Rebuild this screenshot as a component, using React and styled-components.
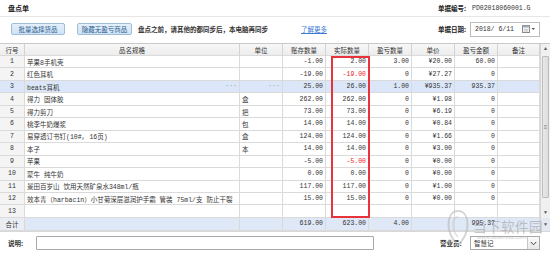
import React from 'react';
import styled, { createGlobalStyle } from 'styled-components';

const Global = createGlobalStyle`
  html, body { margin: 0; padding: 0; background: #fff; }
  body {
    font-family: 'Liberation Mono', 'Noto Sans CJK SC', monospace;
    font-size: 6.5px;
    color: #333;
  }
  * { box-sizing: border-box; }
`;

const Page = styled.div`
  width: 550px;
  height: 254px;
  position: relative;
  overflow: hidden;
  display: flex;
  flex-direction: column;
  background: #fff;
`;

const TitleBar = styled.div`
  height: 17px;
  display: flex;
  align-items: center;
  justify-content: space-between;
  padding: 0 10px 0 8px;
  border-bottom: 1px solid #e6e6e6;
`;

const Title = styled.div`
  font-family: 'Noto Sans CJK SC', sans-serif;
  font-weight: bold;
  font-size: 7px;
  color: #222;
`;

const FieldRow = styled.div`
  width: 102px;
  display: flex;
  align-items: center;
`;

const FieldLabel = styled.span`
  font-family: 'Noto Sans CJK SC', sans-serif;
  font-weight: bold;
  color: #222;
  width: ${p => p.$w}px;
  flex: none;
`;

const FieldValue = styled.span`
  color: #333;
`;

const Toolbar = styled.div`
  height: 26px;
  display: flex;
  align-items: center;
  padding: 0 10px 2px 11px;
`;

const ToolButton = styled.button`
  height: 12px;
  width: ${p => p.$w}px;
  margin-right: ${p => p.$mr}px;
  padding: 0;
  border: 1px solid #9fbcd9;
  border-radius: 2px;
  background: linear-gradient(#e4f0fb, #cfe3f6);
  color: #2f5d8c;
  font-family: 'Noto Sans CJK SC', sans-serif;
  font-size: 6.5px;
  line-height: 10px;
`;

const Notice = styled.span`
  font-family: 'Noto Sans CJK SC', sans-serif;
  font-weight: bold;
  color: #333;
  width: 163px;
  white-space: nowrap;
`;

const Link = styled.a`
  font-family: 'Noto Sans CJK SC', sans-serif;
  color: #3b7bd0;
  text-decoration: underline;
`;

const Spacer = styled.div`
  flex: 1;
`;

const DateBox = styled.div`
  width: 70px;
  height: 15px;
  border: 1px solid #bcbcbc;
  display: flex;
  align-items: center;
  padding: 0 3px 0 4px;
  background: #fff;
  color: #333;
`;

const TableWrap = styled.div`
  display: flex;
  height: 188px;
  border-top: 1px solid #c9c9c9;
`;

const Grid = styled.div`
  position: relative;
  width: 540px;
  display: grid;
  grid-template-columns: 25px 215px repeat(6, 43px) 42px;
  grid-template-rows: 12px repeat(13, 12.46px) 13px;
`;

const Cell = styled.div`
  display: flex;
  align-items: center;
  justify-content: ${p => (p.$align === 'right' ? 'flex-end' : p.$align === 'center' ? 'center' : 'space-between')};
  padding: 0 2px;
  border-right: 1px solid #dadada;
  border-bottom: 1px solid #dadada;
  white-space: nowrap;
  overflow: hidden;
  background: ${p => p.$bg || '#fff'};
  color: ${p => (p.$red ? '#f01818' : '#333')};
`;

const HeadCell = styled(Cell)`
  font-family: 'Noto Sans CJK SC', sans-serif;
  justify-content: center;
  background: linear-gradient(#f7f7f7, #ededed);
  border-right-color: #d2d2d2;
  color: #333;
`;

const Dots = styled.span`
  color: #999;
  letter-spacing: 0;
`;

const RedFrame = styled.div`
  position: absolute;
  left: 331px;
  top: 12px;
  width: 39px;
  height: 162px;
  border: 2px solid #e8323c;
  pointer-events: none;
`;

const ScrollBar = styled.div`
  width: 10px;
  display: flex;
  flex-direction: column;
  background: #f0f0f0;
  border-left: 1px solid #d6d6d6;
`;

const ScrollBtn = styled.div`
  height: ${p => p.$h}px;
  margin-bottom: ${p => p.$mb || 0}px;
  display: flex;
  align-items: center;
  justify-content: center;
  color: #555;
  font-size: 5px;
  background: ${p => p.$bg || 'transparent'};
`;

const Thumb = styled.div`
  height: 142px;
  margin: 0 1px;
  border: 1px solid #bdbdbd;
  border-radius: 1px;
  background: linear-gradient(90deg, #e9e9e9, #dcdcdc);
  display: flex;
  align-items: center;
  justify-content: center;
  color: #777;
  font-size: 6px;
`;

const FooterBar = styled.div`
  flex: 1;
  display: flex;
  align-items: center;
  padding: 0 10px 0 8px;
  border-top: 1px solid #d8d8d8;
`;

const FooterLabel = styled.span`
  font-family: 'Noto Sans CJK SC', sans-serif;
  font-weight: bold;
  color: #333;
  width: ${p => p.$w}px;
  flex: none;
`;

const NoteInput = styled.div`
  width: 338px;
  height: 14px;
  border: 1px solid #a9a9a9;
  border-radius: 1px;
  background: #fff;
`;

const Select = styled.div`
  width: 70px;
  height: 14px;
  border: 1px solid #a9a9a9;
  display: flex;
  align-items: center;
  background: #fff;
`;

const SelectText = styled.span`
  flex: 1;
  padding-left: 3px;
  font-family: 'Noto Sans CJK SC', sans-serif;
  color: #333;
`;

const SelectBtn = styled.div`
  width: 12px;
  height: 100%;
  border-left: 1px solid #c6c6c6;
  background: linear-gradient(#fafafa, #e9e9e9);
  display: flex;
  align-items: center;
  justify-content: center;
`;

const Watermark = styled.div`
  position: absolute;
  left: 447px;
  top: 209px;
  display: flex;
  align-items: center;
  gap: 4px;
  opacity: 0.55;
  pointer-events: none;
`;

const WmText = styled.div`
  display: flex;
  flex-direction: column;
  align-items: flex-start;
  margin-top: 2px;
`;

const WmTitle = styled.span`
  font-family: 'Noto Sans CJK SC', sans-serif;
  font-size: 13.5px;
  line-height: 15px;
  color: #9a9a9a;
  letter-spacing: 0.5px;
`;

const WmSub = styled.span`
  font-family: 'Liberation Sans', sans-serif;
  font-size: 6px;
  color: #a8a8a8;
  margin-left: 4px;
`;

const rows = [
  ['苹果8手机壳', '', '-1.00', '2.00', '3.00', '¥20.00', '60.00'],
  ['红色耳机', '', '-19.00', '-19.00', '0', '¥27.27', '0', true],
  ['beats耳机', '', '25.00', '26.00', '1.00', '¥935.37', '935.37'],
  ['得力 固体胶', '盒', '262.00', '262.00', '0', '¥1.98', '0'],
  ['得力剪刀', '把', '73.00', '73.00', '0', '¥6.19', '0'],
  ['桃李牛奶爆浆', '包', '14.00', '14.00', '0', '¥0.84', '0'],
  ['易穿透订书钉(10#, 16页)', '盒', '124.00', '124.00', '0', '¥1.66', '0'],
  ['本子', '本', '14.00', '14.00', '0', '¥3.00', '0'],
  ['苹果', '', '-5.00', '-5.00', '0', '¥0.00', '0', true],
  ['蒙牛 纯牛奶', '', '0.00', '0.00', '0', '¥0.00', '0'],
  ['景田百岁山 饮用天然矿泉水348ml/瓶', '', '117.00', '117.00', '0', '¥1.00', '0'],
  ['效本青（harbacin）小甘菊深层滋润护手霜 管装 75ml/支 防止干裂', '', '15.00', '15.00', '0', '¥0.00', '0'],
  ['', '', '', '', '', '', ''],
];

const headers = ['行号', '品名规格', '单位', '账存数量', '实际数量', '盈亏数量', '单价', '盈亏金额', '备注'];

const SEL = '#dbe7f8';

function CalendarIcon() {
  return (
    <svg width="14" height="8" viewBox="0 0 14 8">
      <rect x="0.5" y="0.5" width="7" height="7" fill="#f4f4f4" stroke="#8a8a8a" />
      <rect x="0.5" y="0.5" width="7" height="2" fill="#9aa9bb" />
      <line x1="2" y1="4.5" x2="6" y2="4.5" stroke="#aaa" strokeWidth="0.6" />
      <line x1="2" y1="6" x2="6" y2="6" stroke="#aaa" strokeWidth="0.6" />
      <path d="M9.5 3 L13 3 L11.25 5 Z" fill="#555" />
    </svg>
  );
}

function Chevron() {
  return (
    <svg width="7" height="5" viewBox="0 0 7 5">
      <polyline points="0.8,1 3.5,3.8 6.2,1" fill="none" stroke="#444" strokeWidth="1" />
    </svg>
  );
}

function WmLogo() {
  return (
    <svg width="22" height="38" viewBox="0 0 22 38">
      <path d="M11 2 C4 2 1.5 9 1.5 16 C1.5 24 5 30 11 36 C17 30 20.5 24 20.5 16 C20.5 9 18 2 11 2 Z" fill="none" stroke="#b5b5b5" strokeWidth="2" />
      <path d="M11 8 C7 8 6 12 6 16 C6 21 8 25 11 28" fill="none" stroke="#c5c5c5" strokeWidth="1.5" />
    </svg>
  );
}

export default function App() {
  return (
    <Page>
      <Global />
      <TitleBar>
        <Title>盘点单</Title>
        <FieldRow>
          <FieldLabel $w={34}>单据编号:</FieldLabel>
          <FieldValue>PD02018060001.G</FieldValue>
        </FieldRow>
      </TitleBar>
      <Toolbar>
        <ToolButton $w={54} $mr={12}>批量选择货品</ToolButton>
        <ToolButton $w={55} $mr={6}>隐藏无盈亏商品</ToolButton>
        <Notice>盘点之前，请其他的都同步后，本电脑再同步</Notice>
        <Link>了解更多</Link>
        <Spacer />
        <FieldRow>
          <FieldLabel $w={32}>单据日期:</FieldLabel>
          <DateBox>
            <FieldValue>2018/ 6/11</FieldValue>
            <Spacer />
            <CalendarIcon />
          </DateBox>
        </FieldRow>
      </Toolbar>
      <TableWrap>
        <Grid>
          {headers.map(h => (
            <HeadCell key={h}>{h}</HeadCell>
          ))}
          {rows.map((r, i) => {
            const sel = i === 2;
            const bg = sel ? SEL : undefined;
            return (
              <React.Fragment key={i}>
                <Cell $align="center" $bg={sel ? SEL : '#f4f4f4'}>{i + 1}</Cell>
                <Cell $bg={bg}>
                  <span>{r[0]}</span>
                  {sel && <Dots>···</Dots>}
                </Cell>
                <Cell $bg={bg}>
                  <span>{r[1]}</span>
                  {sel && <Dots>···</Dots>}
                </Cell>
                <Cell $align="right" $bg={bg}>{r[2]}</Cell>
                <Cell $align="right" $bg={bg} $red={r[7]}>{r[3]}</Cell>
                <Cell $align="right" $bg={bg}>{r[4]}</Cell>
                <Cell $align="right" $bg={bg}>{r[5]}</Cell>
                <Cell $align="right" $bg={bg}>{r[6]}</Cell>
                <Cell $bg={bg} />
              </React.Fragment>
            );
          })}
          <Cell $align="center" $bg="#eaeef4">合计</Cell>
          <Cell $bg="#dfe8f6" />
          <Cell $bg="#dfe8f6" />
          <Cell $align="right" $bg="#dfe8f6">619.00</Cell>
          <Cell $align="right" $bg="#dfe8f6">623.00</Cell>
          <Cell $align="right" $bg="#dfe8f6">4.00</Cell>
          <Cell $bg="#dfe8f6" />
          <Cell $align="right" $bg="#dfe8f6">995.37</Cell>
          <Cell $bg="#dfe8f6" />
          <RedFrame />
        </Grid>
        <ScrollBar>
          <ScrollBtn $h={10} $mb={2}>▲</ScrollBtn>
          <Thumb>≡</Thumb>
          <Spacer />
          <ScrollBtn $h={10}>▼</ScrollBtn>
          <ScrollBtn $h={13} $bg="#e4e9f1">▼</ScrollBtn>
        </ScrollBar>
      </TableWrap>
      <FooterBar>
        <FooterLabel $w={28}>说明:</FooterLabel>
        <NoteInput />
        <Spacer />
        <FooterLabel $w={30}>营业员:</FooterLabel>
        <Select>
          <SelectText>智慧记</SelectText>
          <SelectBtn>
            <Chevron />
          </SelectBtn>
        </Select>
      </FooterBar>
      <Watermark>
        <WmLogo />
        <WmText>
          <WmTitle>当下软件园</WmTitle>
          <WmSub>www.downxia.com</WmSub>
        </WmText>
      </Watermark>
    </Page>
  );
}
